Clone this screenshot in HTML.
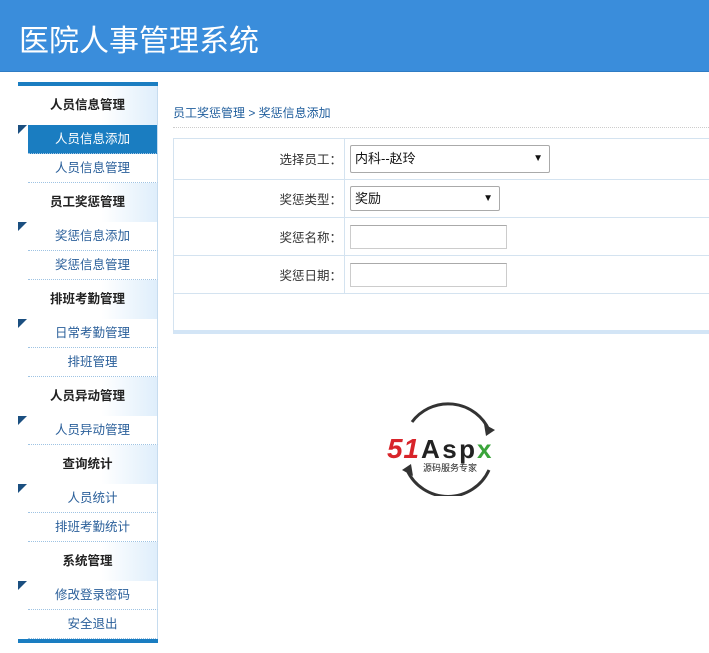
<!DOCTYPE html>
<html><head><meta charset="utf-8"><style>
*{margin:0;padding:0;box-sizing:border-box}
body{width:709px;height:653px;background:#fff;font-family:"Liberation Sans","Noto Sans CJK SC",sans-serif;font-size:12px;color:#333;position:relative;overflow:hidden}
.hd{position:absolute;left:0;top:0;width:709px;height:72px;background:#3a8ddb;border-bottom:1px solid #2f7cc4}
.hd span{position:absolute;left:19px;top:16px;color:#fff;font-size:30px}
.side{position:absolute;left:18px;top:82px;width:140px;border-top:4px solid #1a7dc1;border-bottom:4px solid #1a7dc1}
.h{height:39px;line-height:39px;text-align:center;font-weight:bold;font-size:12.5px;color:#222;background:linear-gradient(90deg,#fff 60%,#dfeefb);border-right:1px solid #c6dcef;position:relative}
.h:after{content:"";position:absolute;left:0;bottom:-9px;border-top:9px solid #1b4f80;border-right:9px solid transparent;z-index:2}
.i{height:29px;line-height:28px;text-align:center;color:#2a5f9a;margin-left:10px;border-bottom:1px dotted #9ec3e3;border-right:1px solid #c6dcef;font-size:12.5px;background:#fff}
.i.a{background:#1a7dc1;color:#fff}
.bc{position:absolute;left:173px;top:104px;color:#1f5d9c;font-size:12px}
.dl{position:absolute;left:173px;top:127px;width:536px;border-top:1px dotted #ccc}
.tb{position:absolute;left:173px;top:138px;width:540px;height:196px;border:1px solid #d4e3f0;border-bottom:4px solid #d3e5f6}
.r{position:absolute;left:0;width:540px;border-bottom:1px solid #d4e3f0}
.l{position:absolute;right:372px;color:#333;font-size:12.5px}
.vl{position:absolute;left:170px;top:0;height:154px;border-left:1px solid #d4e3f0}
.sel{position:absolute;border:1px solid #aaa;border-radius:2px;background:#fff;font-size:13px;color:#111;padding-left:4px}
.sel b{position:absolute;right:6px;font-size:10px}
.inp{position:absolute;border:1px solid #ccc;border-top-color:#aaa;background:#fff}
</style></head><body>
<div class="hd"><span>医院人事管理系统</span></div>
<div class="side">
<div class="h">人员信息管理</div>
<div class="i a">人员信息添加</div><div class="i">人员信息管理</div>
<div class="h">员工奖惩管理</div>
<div class="i">奖惩信息添加</div><div class="i">奖惩信息管理</div>
<div class="h">排班考勤管理</div>
<div class="i">日常考勤管理</div><div class="i">排班管理</div>
<div class="h">人员异动管理</div>
<div class="i">人员异动管理</div>
<div class="h">查询统计</div>
<div class="i">人员统计</div><div class="i">排班考勤统计</div>
<div class="h">系统管理</div>
<div class="i">修改登录密码</div><div class="i">安全退出</div>
</div>
<div class="bc">员工奖惩管理 &gt; 奖惩信息添加</div>
<div class="dl"></div>
<div class="tb">
<div class="vl"></div>
<div class="r" style="top:0;height:41px"><span class="l" style="top:10px">选择员工：</span></div>
<div class="r" style="top:41px;height:38px"><span class="l" style="top:9px">奖惩类型：</span></div>
<div class="r" style="top:79px;height:38px"><span class="l" style="top:9px">奖惩名称：</span></div>
<div class="r" style="top:117px;height:38px"><span class="l" style="top:9px">奖惩日期：</span></div>
<div class="sel" style="left:176px;top:6px;width:200px;height:28px;line-height:26px">内科--赵玲<b>▼</b></div>
<div class="sel" style="left:176px;top:47px;width:150px;height:25px;line-height:23px">奖励<b>▼</b></div>
<div class="inp" style="left:176px;top:86px;width:157px;height:24px"></div>
<div class="inp" style="left:176px;top:124px;width:157px;height:24px"></div>
</div>
<svg style="position:absolute;left:385px;top:400px" width="130" height="96" viewBox="0 0 130 96">
<path d="M27 22 A45 45 0 0 1 104 30" fill="none" stroke="#333" stroke-width="3"/>
<path d="M104 70 A45 45 0 0 1 22 70" fill="none" stroke="#333" stroke-width="3"/>
<polygon points="99,24 110,30 101,36" fill="#333"/>
<polygon points="28,76 17,70 26,64" fill="#333"/>
<text x="2" y="58" font-family="Liberation Sans" font-weight="bold" font-style="italic" font-size="28" fill="#d8242a" textLength="32">51</text>
<text x="36" y="58" font-family="Liberation Sans" font-weight="bold" font-size="26" fill="#222" textLength="54">Asp</text>
<text x="92" y="58" font-family="Liberation Sans" font-weight="bold" font-size="26" fill="#3aa43a" textLength="32">x</text>
<text x="38" y="71" font-family="Noto Sans CJK SC" font-size="9" fill="#222">源码服务专家</text>
</svg>
</body></html>
